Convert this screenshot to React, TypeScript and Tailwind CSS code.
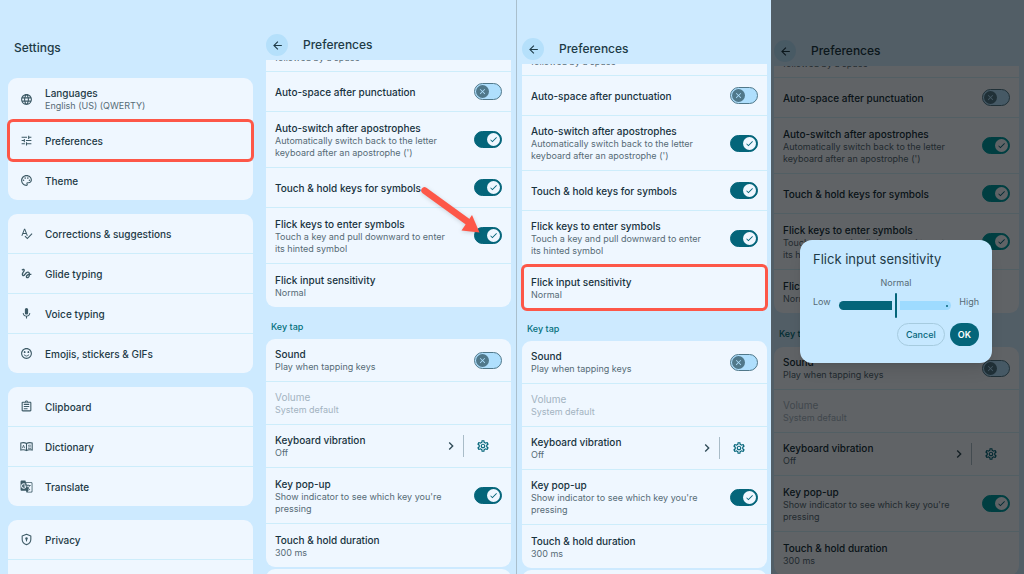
import React, { ReactNode, useId, useState } from 'react'
import {
    MdArrowBack,
    MdCheck,
    MdChevronRight,
    MdClose,
    MdGTranslate,
    MdGesture,
    MdLanguage,
    MdMic,
    MdOutlineAssignment,
    MdOutlinePalette,
    MdOutlineSettings,
    MdSentimentSatisfiedAlt,
    MdSpellcheck,
    MdTune,
} from 'react-icons/md'

type Variant = 'tour' | 'highlight' | 'dimmed'

function BookIcon() {
    return (
        <svg viewBox="0 0 24 24" fill="none" stroke="currentColor" strokeWidth="2" className="w-[13px] h-[13px]">
            <path d="M12 6.5C9 4.6 5 4.6 1.5 5.5v13c3.500-.9 7.500-.9 10.500 1 3-1.900 7-1.900 10.500-1v-13C19 4.600 15 4.600 12 6.500z" />
            <path d="M12 6.500v13" />
            <path d="M15 10c1.500-.5 3-.5 5-.3M15 13c1.500-.5 3-.5 5-.3M15 16c1.500-.5 3-.5 5-.3M4.500 15 6.500 9.500 8.500 15" strokeWidth="1.500" />
        </svg>
    )
}

function ShieldIcon() {
    return (
        <svg viewBox="0 0 24 24" fill="none" stroke="currentColor" strokeWidth="2" className="w-[13px] h-[13px]">
            <path d="M12 2.500 4 5.500v6c0 4.800 3 8.600 8 10 5-1.400 8-5.200 8-10v-6z" strokeLinejoin="round" />
            <circle cx="12" cy="10" r="2.300" fill="currentColor" stroke="none" />
            <path d="M12 10v5.500" />
        </svg>
    )
}

function Highlight() {
    return <span className="absolute -inset-x-px -inset-y-0.5 border-3 border-[#fd5748] rounded-md pointer-events-none" />
}

const groups: { icon: ReactNode, label: string, detail?: string, active?: boolean }[][] = [
    [
        { icon: <MdLanguage size={13} />, label: 'Languages', detail: 'English (US) (QWERTY)' },
        { icon: <MdTune size={13} />, label: 'Preferences', active: true },
        { icon: <MdOutlinePalette size={13} />, label: 'Theme' },
    ],
    [
        { icon: <MdSpellcheck size={13} />, label: 'Corrections & suggestions' },
        { icon: <MdGesture size={13} />, label: 'Glide typing' },
        { icon: <MdMic size={13} />, label: 'Voice typing' },
        { icon: <MdSentimentSatisfiedAlt size={13} />, label: 'Emojis, stickers & GIFs' },
    ],
    [
        { icon: <MdOutlineAssignment size={13} />, label: 'Clipboard' },
        { icon: <BookIcon />, label: 'Dictionary' },
        { icon: <MdGTranslate size={13} />, label: 'Translate' },
    ],
    [
        { icon: <ShieldIcon />, label: 'Privacy' },
        { icon: null, label: '' },
    ],
]

function SettingsMenu() {
    return (
        <nav className="min-w-0 overflow-hidden pl-2 pr-[5px] pt-[38px]">
            <h1 className="pl-1.5 text-xs leading-5 font-medium text-[#1d3a46]">Settings</h1>
            <div className="flex flex-col gap-3.5 mt-5">
                {groups.map((items, index) => (
                    <ul key={index} className="rounded-[9px] bg-[#eff7ff]">
                        {items.map((item) => (
                            <li key={item.label} className="relative border-b border-[#cdedfb] last:border-b-0">
                                {item.label ? (
                                    <a
                                        href="#"
                                        className={`flex items-center gap-3 pl-3 text-[#3d5a66] ${item.detail ? 'h-[42px]' : 'h-[39px]'}`}
                                    >
                                        {item.icon}
                                        <span>
                                            <span className="block text-[10px] leading-[14px] font-medium text-[#1d3a46]">{item.label}</span>
                                            {item.detail && <span className="block text-[9px] leading-3 text-[#566b76]">{item.detail}</span>}
                                        </span>
                                    </a>
                                ) : (
                                    <div className="h-[39px]" />
                                )}
                                {item.active && <Highlight />}
                            </li>
                        ))}
                    </ul>
                ))}
            </div>
        </nav>
    )
}

function Toggle({ id, on, dimmed }: { id: string, on: boolean, dimmed: boolean }) {
    const [checked, setChecked] = useState(on);
    const onColor = dimmed ? 'bg-[#009ca3] border-[#009ca3]' : 'bg-[#04657a] border-[#04657a]'

    return (
        <span className="relative flex shrink-0">
            <input
                id={id}
                type="checkbox"
                checked={checked}
                onChange={(e) => setChecked(e.target.checked)}
                className={`appearance-none w-7 h-[17px] rounded-full border ${checked ? onColor : 'bg-[#afdffd] border-[#50788a]'}`}
            />
            <span
                className={`absolute top-0.5 w-[13px] h-[13px] rounded-full flex items-center justify-center pointer-events-none ${checked ? 'right-0.5 bg-[#eff7ff] text-[#04657a]' : 'left-0.5 bg-[#50788a] text-[#afdffd]'}`}
            >
                {checked ? <MdCheck size={9} /> : <MdClose size={9} />}
            </span>
        </span>
    )
}

type RowProps = {
    title: string
    detail?: string
    on?: boolean
    variant: Variant
    disabled?: boolean
    children?: ReactNode
}

function Row({ title, detail, on, variant, disabled, children }: RowProps) {
    const id = useId();
    const twoLines = detail && detail.length > 30
    let height = 'min-h-10'
    if (detail) height = 'min-h-[43px]'
    if (twoLines) height = variant === 'highlight' ? 'min-h-[55px]' : 'min-h-14'

    const text = (
        <>
            <span className={`block text-[10px] leading-[14px] ${disabled ? 'text-[#a3b3bf]' : 'font-medium text-[#18333e]'}`}>{title}</span>
            {detail && <span className={`block text-[9px] leading-3 ${disabled ? 'text-[#a3b3bf]' : 'text-[#566b76]'}`}>{detail}</span>}
        </>
    )

    return (
        <li className={`relative flex items-center justify-between px-[9px] border-b border-[#cdedfb] last:border-b-0 ${height}`}>
            {on === undefined ? (
                <div>{text}</div>
            ) : (
                <>
                    <label htmlFor={id} className="max-w-[178px]">{text}</label>
                    <Toggle id={id} on={on} dimmed={variant === 'dimmed'} />
                </>
            )}
            {children}
        </li>
    )
}

function Arrow() {
    return (
        <svg viewBox="0 0 62 50" className="absolute -top-[22px] right-[29px] w-[62px] h-[50px] pointer-events-none drop-shadow-sm">
            <path d="M4.500 4.500 48 36" stroke="#fd5748" strokeWidth="6.500" strokeLinecap="round" />
            <path d="M59.500 46.500 41.500 44.500 52 29z" fill="#fd5748" />
        </svg>
    )
}

function Preferences({ variant, children }: { variant: Variant, children?: ReactNode }) {
    let layout = 'pl-2 pr-[5px]'
    let header = 'h-[60px]'
    let heading = 'h-8'
    if (variant === 'highlight') {
        layout = 'pl-[5px] pr-1 border-l border-[#a9bfcd]'
        header = 'h-16'
    }
    if (variant === 'dimmed') {
        layout = 'pl-[3px] pr-[5px]'
        header = 'h-[66px]'
        heading = 'h-[34px]'
    }

    return (
        <section className={`relative min-w-0 overflow-hidden bg-[#cdeaff] ${layout}`}>
            <header className={`flex items-end gap-[15px] pb-1 ${header}`}>
                <button aria-label="Back" className="flex items-center justify-center w-[22px] h-[22px] rounded-full bg-[#b5e0fb] text-[#1d3a46]">
                    <MdArrowBack size={13} />
                </button>
                <h2 className="text-xs leading-[22px] font-medium text-[#1d3a46]">Preferences</h2>
            </header>

            <ul className="rounded-b-[9px] bg-[#eff7ff]">
                <li className="flex items-end h-3 px-[9px] pb-[7px] overflow-hidden border-b border-[#cdedfb] text-[9px] leading-3 text-[#566b76]">
                    followed by a space
                </li>
                <Row variant={variant} title="Auto-space after punctuation" on={false} />
                <Row variant={variant} title="Auto-switch after apostrophes" detail="Automatically switch back to the letter keyboard after an apostrophe (')" on />
                <Row variant={variant} title="Touch & hold keys for symbols" on />
                <Row variant={variant} title="Flick keys to enter symbols" detail="Touch a key and pull downward to enter its hinted symbol" on>
                    {variant === 'tour' && <Arrow />}
                </Row>
                <Row variant={variant} title="Flick input sensitivity" detail="Normal">
                    {variant === 'highlight' && <Highlight />}
                </Row>
            </ul>

            <h3 className={`flex items-center pt-2 pl-[5px] text-[9px] font-medium text-[#04707c] ${heading}`}>Key tap</h3>

            <ul className="rounded-[9px] bg-[#eff7ff]">
                <Row variant={variant} title="Sound" detail="Play when tapping keys" on={false} />
                <Row variant={variant} title="Volume" detail="System default" disabled />
                <Row variant={variant} title="Keyboard vibration" detail="Off">
                    <div className="flex items-center pr-3">
                        <MdChevronRight size={16} className="text-[#2f4b57]" />
                        <span className="w-px h-[22px] ml-1 mr-3 bg-[#a9bcc8]" />
                        <button aria-label="Vibration settings" className="text-[#04657a]">
                            <MdOutlineSettings size={14} />
                        </button>
                    </div>
                </Row>
                <Row variant={variant} title="Key pop-up" detail="Show indicator to see which key you're pressing" on />
                <Row variant={variant} title="Touch & hold duration" detail="300 ms" />
            </ul>
            <div className="h-10 mt-0.5 rounded-t-[9px] bg-[#eff7ff]" />
            {children}
        </section>
    )
}

function SensitivityDialog() {
    const [value, setValue] = useState(50);

    return (
        <div className="absolute inset-0 pt-60 pl-[29px] pr-8 bg-black/60">
            <div role="dialog" aria-labelledby="sensitivity-title" className="px-[13px] pt-[9px] pb-[17px] rounded-xl bg-[#c6e8ff] shadow-lg">
                <h2 id="sensitivity-title" className="text-[13px] leading-5 text-[#1d3a46]">Flick input sensitivity</h2>
                <label htmlFor="sensitivity" className="block mt-2 text-center text-[9px] leading-3 text-[#566b76]">Normal</label>
                <div className="flex items-start justify-between mt-1 text-[9px] text-[#566b76]">
                    <span className="w-[26px] pt-[3px] leading-3">Low</span>
                    <div className="relative flex grow items-center h-[25px] gap-[3px]">
                        <span className="h-[9px] rounded-l-full rounded-r-xs bg-[#04657a]" style={{ width: `${value - 3}%` }} />
                        <span className="w-0.5 h-full rounded-full bg-[#04657a]" />
                        <span className="flex grow items-center justify-end h-[9px] pr-[3px] rounded-r-full rounded-l-xs bg-[#9edbff]">
                            <span className="w-0.5 h-0.5 rounded-full bg-[#04657a]" />
                        </span>
                        <input
                            id="sensitivity"
                            type="range"
                            value={value}
                            onChange={(e) => setValue(Number(e.target.value))}
                            className="absolute inset-0 w-full opacity-0"
                        />
                    </div>
                    <span className="w-7 pt-[3px] leading-3 text-right">High</span>
                </div>
                <div className="flex justify-end gap-[5px] mt-[5px]">
                    <button className="h-[23px] px-2 rounded-full border border-[#a6cbdf] text-[9px] font-medium text-[#04657a]">Cancel</button>
                    <button className="h-[23px] px-2 rounded-full bg-[#04657a] text-[9px] font-semibold text-white">OK</button>
                </div>
            </div>
        </div>
    )
}

function App() {
    return (
        <main className="grid grid-cols-[258fr_258fr_255fr_253fr] grid-rows-1 h-screen overflow-hidden bg-[#cdeaff] font-['Inter','Open_Sans',sans-serif]">
            <SettingsMenu />
            <Preferences variant="tour" />
            <Preferences variant="highlight" />
            <Preferences variant="dimmed">
                <SensitivityDialog />
            </Preferences>
        </main>
    )
}

export default App
